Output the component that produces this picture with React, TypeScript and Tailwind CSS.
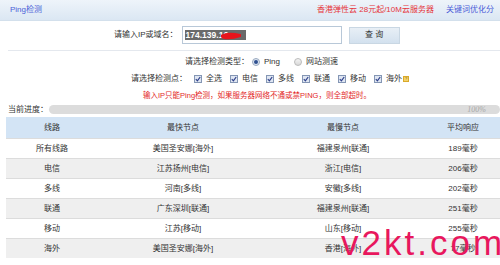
import React from "react";

const Check = () => (
  <span className="inline-flex w-[8px] h-[8px] border border-[#8496b4] bg-[#dfe6f2] items-center justify-center mr-[4px]">
    <svg width="6" height="6" viewBox="0 0 6 6">
      <path d="M0.8 3.2 L2.4 4.8 L5.2 1" stroke="#2d3f8a" strokeWidth="1.2" fill="none" />
    </svg>
  </span>
);

const rows = [
  ["所有线路", "美国圣安娜[海外]", "福建泉州[联通]", "189毫秒"],
  ["电信", "江苏扬州[电信]", "浙江[电信]", "206毫秒"],
  ["多线", "河南[多线]", "安徽[多线]", "202毫秒"],
  ["联通", "广东深圳[联通]", "福建泉州[联通]", "251毫秒"],
  ["移动", "江苏[移动]", "山东[移动]", "255毫秒"],
  ["海外", "美国圣安娜[海外]", "香港[海外]", "77毫秒"],
];

export default function App() {
  return (
    <div
      className="relative w-[500px] h-[265px] overflow-hidden bg-white text-[8px] leading-none text-[#333]"
      style={{ fontFamily: "'Liberation Sans','Noto Sans CJK SC',sans-serif" }}
    >
      {/* header */}
      <div className="h-[21px] flex items-center bg-gradient-to-b from-[#eef4fa] to-[#dbe7f3] border-b border-[#d3e0ec] whitespace-nowrap">
        <span className="ml-[10px] text-[#4b5fd8]">Ping检测</span>
        <span className="ml-[275px] text-[#e6343a]">香港弹性云 28元起/10M云服务器</span>
        <span className="ml-[12px] text-[#4b5cd8]">关键词优化分</span>
      </div>

      {/* input row */}
      <div className="flex items-center mt-[5px] pl-[114px] h-[18px] whitespace-nowrap">
        <span>请输入IP或域名：</span>
        <div className="ml-[4px] w-[160px] h-[18px] border border-[#b8c8d8] bg-white flex items-center pl-[2px] relative">
          <span className="bg-[#6a6a6a] text-white font-bold px-[1px] py-[1px] text-[8.5px]">174.139.16&nbsp;&nbsp;&nbsp;&nbsp;&nbsp;&nbsp;&nbsp;</span>
          <svg className="absolute left-[38px] top-[5px]" width="20" height="8" viewBox="0 0 20 8">
            <path d="M1 4 C5 2, 12 2, 19 3.5 C12 6, 5 6, 2 5" stroke="#e8141c" strokeWidth="3" fill="#e8141c" strokeLinecap="round" />
          </svg>
        </div>
        <div className="ml-[7px] w-[51px] h-[17px] border border-[#c9d7e3] bg-gradient-to-b from-[#e8eff6] to-[#d3e1ee] flex items-center justify-center text-[#333]">
          查 询
        </div>
      </div>

      <div className="ml-[8px] mt-[6px] border-t border-[#e4e8ee]" />

      {/* radio row */}
      <div className="flex items-center mt-[6px] pl-[185px] h-[10px] whitespace-nowrap">
        <span>请选择检测类型：</span>
        <span className="ml-[3px] w-[8px] h-[8px] rounded-full border border-[#9aa9bf] bg-[#dfe8f3] flex items-center justify-center">
          <span className="w-[4px] h-[4px] rounded-full bg-[#2f4f8f]" />
        </span>
        <span className="ml-[4px]">Ping</span>
        <span className="ml-[14px] w-[8px] h-[8px] rounded-full border border-[#bbbbbb] bg-gradient-to-b from-[#f4f4f4] to-[#d8d8d8]" />
        <span className="ml-[4px]">网站测速</span>
      </div>

      {/* checkbox row */}
      <div className="flex items-center mt-[7px] pl-[131px] h-[10px] whitespace-nowrap">
        <span className="mr-[7px]">请选择检测点：</span>
        {["全选", "电信", "多线", "联通", "移动", "海外"].map((t) => (
          <span key={t} className="flex items-center mr-[8px]">
            <Check />
            <span>{t}</span>
            {t === "海外" && (
              <span className="ml-[1px] w-[6px] h-[6px] bg-[#f3d36b] border border-[#d9a92b] text-[4px] text-[#8a5a00] flex items-center justify-center">?</span>
            )}
          </span>
        ))}
      </div>

      {/* warning */}
      <div className="mt-[8px] pl-[143px] h-[10px] text-[#e32727] whitespace-nowrap text-[7.5px]">
        输入IP只能Ping检测，如果服务器网络不通或禁PING，则全部超时。
      </div>

      {/* progress */}
      <div className="flex items-center mt-[3px] pl-[8px] h-[9px] whitespace-nowrap">
        <span>当前进度：</span>
        <div className="ml-[1px] w-[470px] h-[9px] rounded-full bg-[#dcdcdc] flex items-center justify-end pr-[14px]">
          <span className="italic text-[#a8a8a8]" style={{ fontFamily: "'Liberation Serif',serif" }}>100%</span>
        </div>
      </div>

      {/* table */}
      <div className="ml-[6px] mt-[3px] w-[502px]">
        <div className="grid grid-cols-[92px_170px_150px_90px] h-[21px] bg-[#d3e4f5] items-center text-center">
          <span>线路</span>
          <span>最快节点</span>
          <span>最慢节点</span>
          <span>平均响应</span>
        </div>
        {rows.map((r, i) => (
          <div
            key={r[0]}
            className={`grid grid-cols-[92px_170px_150px_90px] h-[20px] items-center text-center border-t border-[#dcdcdc] ${
              i % 2 === 1 ? "bg-[#efefef]" : "bg-white"
            }`}
          >
            {r.map((c, j) => (
              <span key={j}>{c}</span>
            ))}
          </div>
        ))}
      </div>

      {/* watermark */}
      <div
        className="absolute left-[341px] top-[225px] text-[35px] leading-none tracking-[3px] text-[#e8175d] whitespace-nowrap"
        style={{ fontFamily: "'Liberation Sans',sans-serif" }}
      >
        v2kt.com
      </div>
    </div>
  );
}
